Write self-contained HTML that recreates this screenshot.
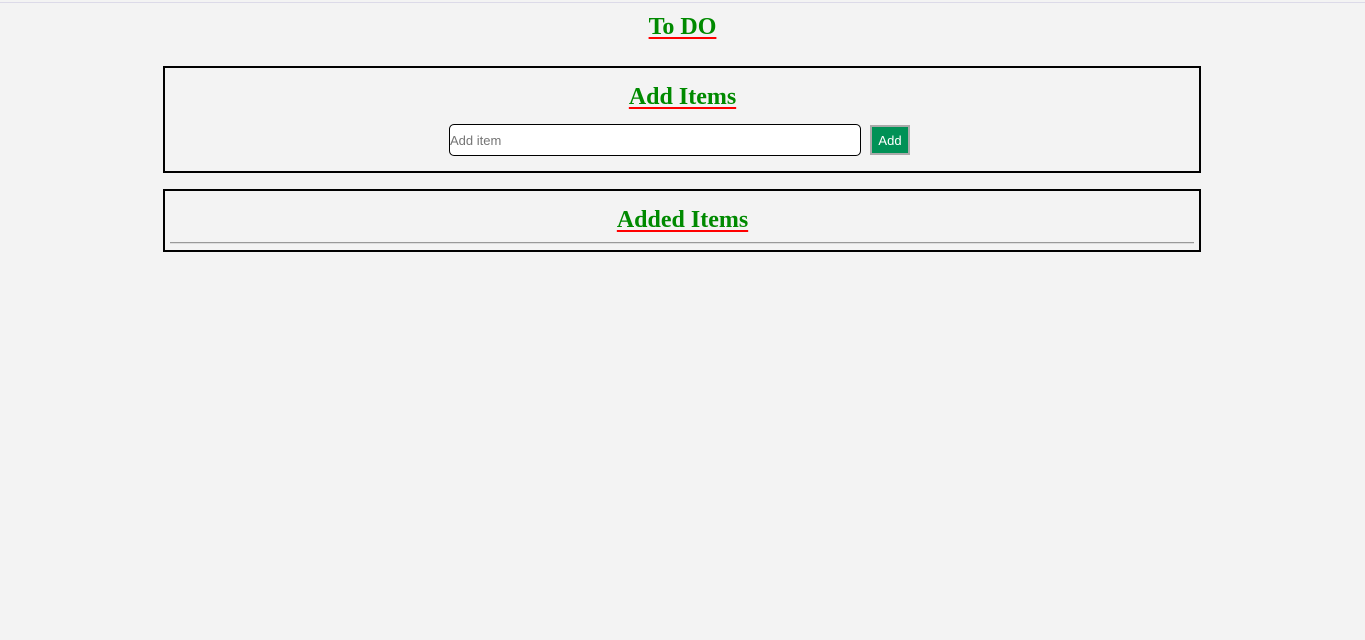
<!DOCTYPE html>
<html><head><style>
html,body{margin:0;padding:0;background:#f3f3f3;width:1365px;height:640px;overflow:hidden}
.top{position:absolute;left:0;top:2px;width:1365px;height:1px;background:#dcdae8}
h1,h2{font-family:"Liberation Serif",serif;font-weight:bold;color:#008a00;text-decoration:underline;text-decoration-color:#f00;text-decoration-thickness:2px;text-underline-offset:3px;margin:0;text-align:center;position:absolute;left:0;width:100%;font-size:24px;line-height:28px}
.box{position:absolute;left:163px;width:1034px;border:2px solid #000}
input{position:absolute;left:449px;top:124px;box-sizing:border-box;width:412px;height:32px;border:1px solid #000;border-radius:5px;background:#fff;padding:0;font:13px "Liberation Sans",sans-serif;color:#777}
.btn{position:absolute;left:870px;top:125px;width:40px;height:30px;box-sizing:border-box;background:#009156;border:2px solid #aaa;color:#fff;font:13px "Liberation Sans",sans-serif;text-align:center;line-height:28px}
.hr{position:absolute;left:170px;top:242px;width:1024px;height:1px;background:#999;border-bottom:1px solid #ddd}
</style></head><body>
<div class="top"></div>
<h1 style="top:13px">To DO</h1>
<div class="box" style="top:66px;height:103px"></div>
<h2 style="top:83px">Add Items</h2>
<input placeholder="Add item" value="">
<div class="btn">Add</div>
<div class="box" style="top:189px;height:59px"></div>
<h2 style="top:206px">Added Items</h2>
<div class="hr"></div>
</body></html>
